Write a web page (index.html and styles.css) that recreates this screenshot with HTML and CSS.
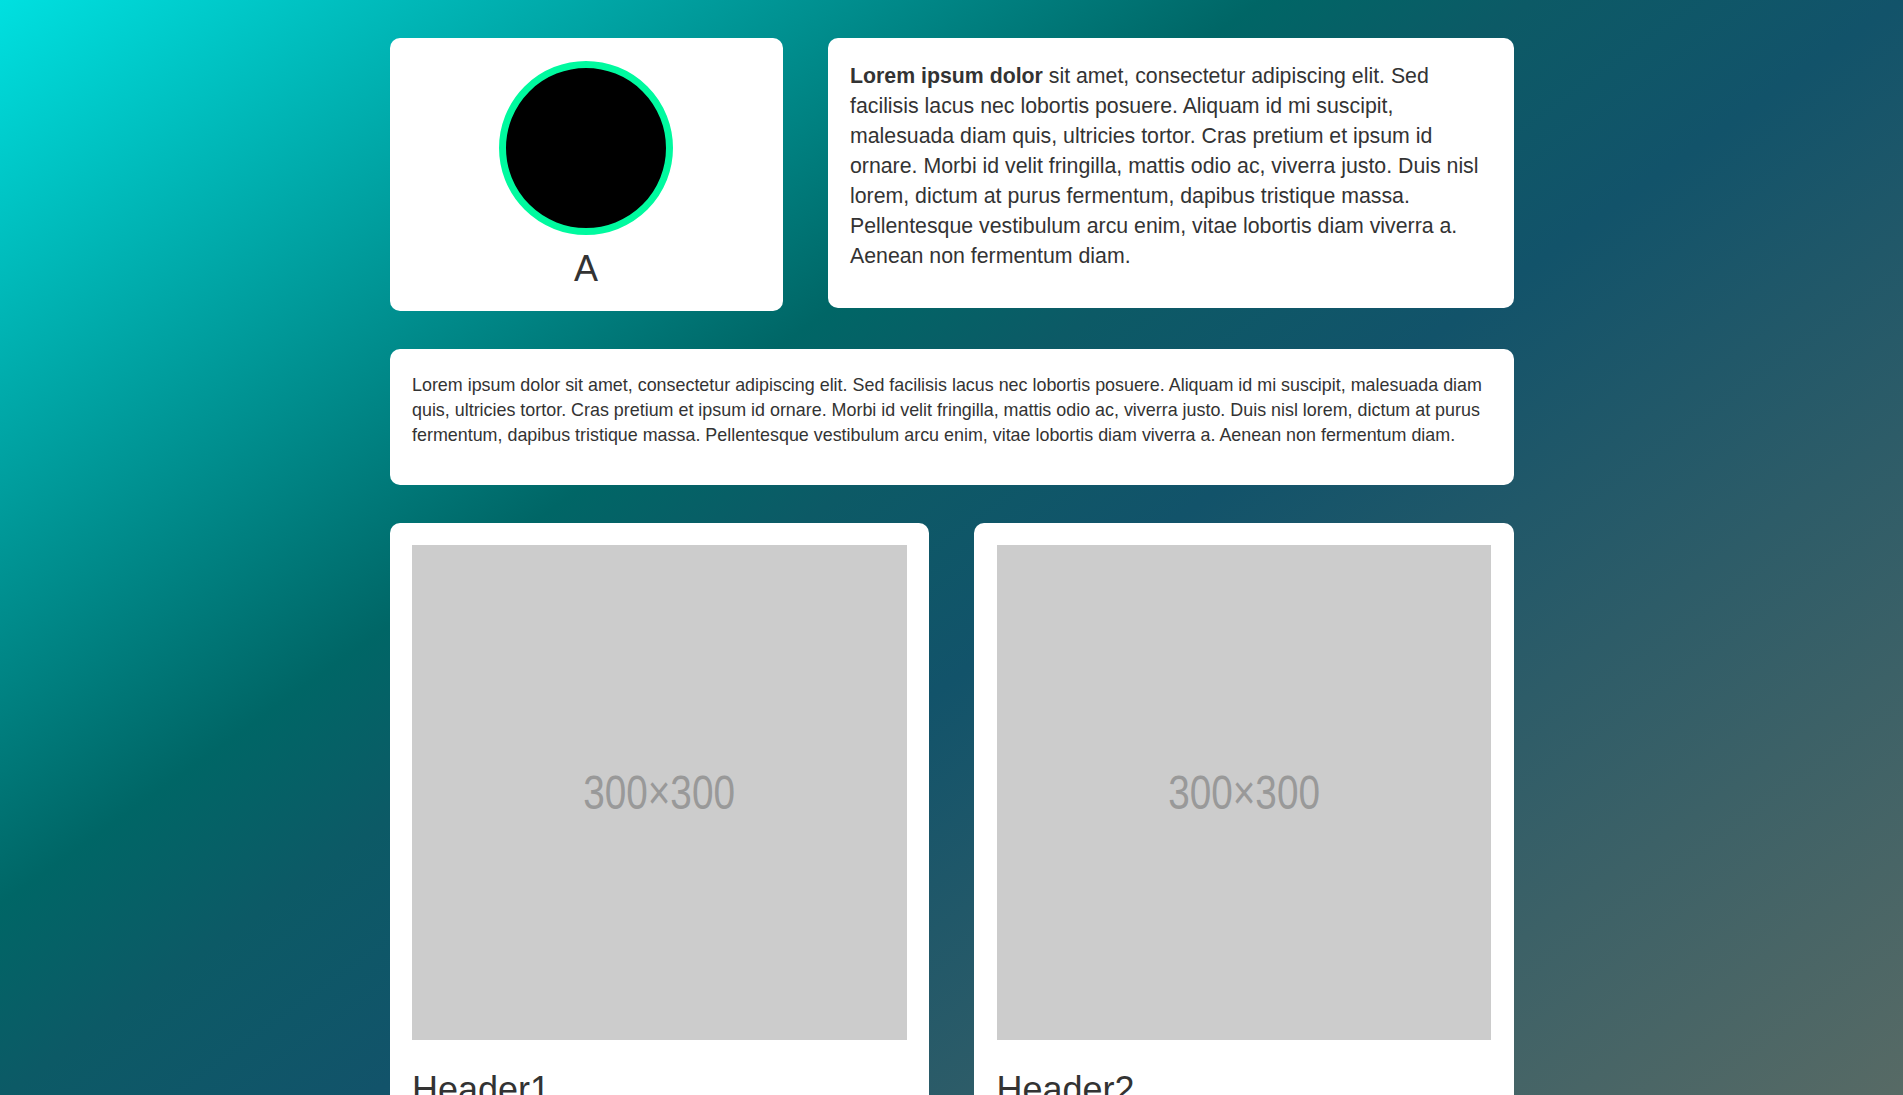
FILE: index.html
```html
<!DOCTYPE html>
<html lang="en">
<head>
<meta charset="utf-8">
<title>Cards</title>
<link rel="stylesheet" href="styles.css">
</head>
<body>
<div class="page">
  <div class="row row-top">
    <div class="card card-avatar">
      <div class="avatar"></div>
      <h1 class="avatar-label">A</h1>
    </div>
    <div class="card card-intro">
      <p><strong>Lorem ipsum dolor</strong> sit amet, consectetur adipiscing elit. Sed facilisis lacus nec lobortis posuere. Aliquam id mi suscipit, malesuada diam quis, ultricies tortor. Cras pretium et ipsum id ornare. Morbi id velit fringilla, mattis odio ac, viverra justo. Duis nisl lorem, dictum at purus fermentum, dapibus tristique massa. Pellentesque vestibulum arcu enim, vitae lobortis diam viverra a. Aenean non fermentum diam.</p>
    </div>
  </div>
  <div class="card card-wide">
    <p>Lorem ipsum dolor sit amet, consectetur adipiscing elit. Sed facilisis lacus nec lobortis posuere. Aliquam id mi suscipit, malesuada diam quis, ultricies tortor. Cras pretium et ipsum id ornare. Morbi id velit fringilla, mattis odio ac, viverra justo. Duis nisl lorem, dictum at purus fermentum, dapibus tristique massa. Pellentesque vestibulum arcu enim, vitae lobortis diam viverra a. Aenean non fermentum diam.</p>
  </div>
  <div class="row row-gallery">
    <div class="card card-item">
      <div class="placeholder"><span class="placeholder-text">300×300</span></div>
      <h1 class="item-title">Header1</h1>
    </div>
    <div class="card card-item">
      <div class="placeholder"><span class="placeholder-text">300×300</span></div>
      <h1 class="item-title">Header2</h1>
    </div>
  </div>
</div>
</body>
</html>
```
FILE: styles.css
```css
html {
  min-height: 100%;
  background: linear-gradient(144.4deg, #00e0e0 0%, #006666 36.8%, #0c5a66 44.6%, #12536a 55.4%, #576a65 100%) fixed;
}

body {
  margin: 0;
  font-family: "Liberation Sans", Arial, sans-serif;
  color: #333;
}

.page {
  width: 1124px;
  margin: 0 auto;
  padding-top: 38px;
}

.row {
  display: flex;
  align-items: flex-start;
  gap: 45px;
  margin-bottom: 38px;
}

.card {
  background: #fff;
  border-radius: 10px;
  padding: 22.5px;
  box-sizing: border-box;
}

.card-avatar {
  width: 393px;
  display: flex;
  flex-direction: column;
  align-items: center;
}

.avatar {
  width: 174px;
  height: 174px;
  box-sizing: border-box;
  border-radius: 50%;
  background: #000;
  border: 7px solid #00fa9f;
}

.avatar-label {
  font-size: 36px;
  line-height: 1.1;
  font-weight: normal;
  margin: 14px 0 0;
}

.card-intro {
  width: 686px;
}

.card-intro p {
  font-size: 21.3px;
  line-height: 30px;
  margin: 0 0 15px;
}

.card-wide {
  margin-bottom: 38px;
  padding-top: 24px;
}

.card-wide p {
  font-size: 17.9px;
  line-height: 25px;
  margin: 0 0 14.5px;
}

.card-item {
  flex: 1;
}

.placeholder {
  aspect-ratio: 1 / 1;
  background: #ccc;
  display: flex;
  align-items: center;
  justify-content: center;
}

.placeholder-text {
  display: inline-block;
  font-size: 49px;
  color: #999;
  transform: scaleX(0.79);
}

.item-title {
  font-size: 36px;
  line-height: 1.1;
  font-weight: normal;
  margin: 30px 0 10px;
}
```
